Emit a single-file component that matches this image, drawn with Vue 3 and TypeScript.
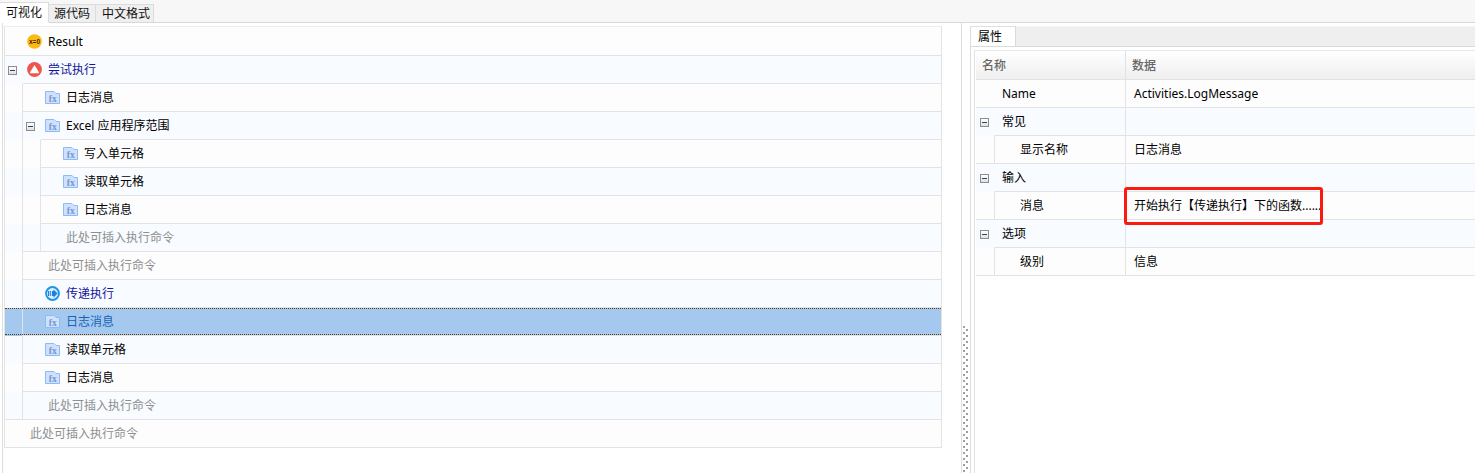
<script setup lang="ts">
type Ico = 'none' | 'x0' | 'try' | 'fx' | 'pass'
interface Row { d: number; text: string; icon: Ico; open?: boolean; kind?: 'hint' | 'blue'; sel?: boolean }
const raw: Row[] = [
  { d: 0, text: 'Result', icon: 'x0' },
  { d: 0, text: '尝试执行', icon: 'try', open: true, kind: 'blue' },
  { d: 1, text: '日志消息', icon: 'fx' },
  { d: 1, text: 'Excel 应用程序范围', icon: 'fx', open: true },
  { d: 2, text: '写入单元格', icon: 'fx' },
  { d: 2, text: '读取单元格', icon: 'fx' },
  { d: 2, text: '日志消息', icon: 'fx' },
  { d: 2, text: '此处可插入执行命令', icon: 'none', kind: 'hint' },
  { d: 1, text: '此处可插入执行命令', icon: 'none', kind: 'hint' },
  { d: 1, text: '传递执行', icon: 'pass', kind: 'blue' },
  { d: 1, text: '日志消息', icon: 'fx', sel: true },
  { d: 1, text: '读取单元格', icon: 'fx' },
  { d: 1, text: '日志消息', icon: 'fx' },
  { d: 1, text: '此处可插入执行命令', icon: 'none', kind: 'hint' },
  { d: 0, text: '此处可插入执行命令', icon: 'none', kind: 'hint' },
]
const rows = raw.map((r, i) => ({ ...r, next: i + 1 < raw.length ? raw[i + 1].d : 0, stripe: i % 2 === 1 }))
const tabs = [
  { label: '可视化', active: true },
  { label: '源代码', active: false },
  { label: '中文格式', active: false },
]
const props = [
  { name: 'Name', value: 'Activities.LogMessage', child: false, group: false },
  { name: '常见', value: '', child: false, group: true },
  { name: '显示名称', value: '日志消息', child: true, group: false },
  { name: '输入', value: '', child: false, group: true },
  { name: '消息', value: '开始执行【传递执行】下的函数......', child: true, group: false },
  { name: '选项', value: '', child: false, group: true },
  { name: '级别', value: '信息', child: true, group: false },
]
</script>

<template>
  <div class="app">
    <div class="tabbar">
      <div v-for="t in tabs" :key="t.label" class="tab" :class="{ active: t.active }">{{ t.label }}</div>
    </div>
    <div class="body">
      <div class="left">
        <div class="tree">
          <div v-for="(r, i) in rows" :key="i" class="row" :class="{ stripe: r.stripe, sel: r.sel }">
            <div v-for="g in r.d" :key="g" class="guide" :class="{ line: g - 1 >= r.next }"></div>
            <div class="tog" :class="{ line: r.next <= r.d }">
              <span v-if="r.open" class="minus"></span>
            </div>
            <div class="cell" :class="r.kind">
              <svg v-if="r.icon === 'x0'" class="ico" viewBox="0 0 15 15">
                <circle cx="7.5" cy="7.5" r="7.3" fill="#fdb913" />
                <text x="7.5" y="9.800" text-anchor="middle" class="x0">x=0</text>
              </svg>
              <svg v-else-if="r.icon === 'try'" class="ico" viewBox="0 0 15 15">
                <circle cx="7.5" cy="7.5" r="7.4" fill="#f0554a" />
                <path d="M7.5 3 11.800 10a.8.8 0 0 1-.7 1.300H3.900a.8.8 0 0 1-.7-1.300z" fill="#fff" />
              </svg>
              <svg v-else-if="r.icon === 'fx'" class="ico" viewBox="0 0 15 15">
                <path d="M.5 1.5h8.500l2 2h3.500v10h-14z" fill="#cfe1fd" stroke="#8dbbfa" />
                <text x="7.800" y="11.800" text-anchor="middle" class="fx">fx</text>
              </svg>
              <svg v-else-if="r.icon === 'pass'" class="ico" viewBox="0 0 15 15">
                <circle cx="7.5" cy="7.5" r="6.4" fill="#e3f2fd" stroke="#1e96e8" stroke-width="2" />
                <path d="M3 5h5.500V3.300l4 4.200-4 4.200V10H3z" fill="#1e7fe0" />
                <path d="M4.700 5v5M6.500 5v5" stroke="#fff" stroke-width=".8" />
              </svg>
              <span v-else class="noico"></span>
              <span class="label">{{ r.text }}</span>
            </div>
          </div>
        </div>
      </div>
      <div class="split"><span class="grip"></span></div>
      <div class="right">
        <div class="rtabs"><div class="rtab">属性</div></div>
        <div class="grid">
          <div class="ghead">
            <div class="gh1">名称</div>
            <div class="gh2">数据</div>
          </div>
          <div v-for="p in props" :key="p.name" class="prow" :class="{ group: p.group }">
            <div class="pleft">
              <div class="ptog" :class="{ guide2: p.child, line: !p.group }">
                <span v-if="p.group" class="minus"></span>
              </div>
              <div class="pname" :class="{ sub: p.child }">{{ p.name }}</div>
            </div>
            <div class="pval">{{ p.value }}</div>
          </div>
          <div class="redbox"></div>
        </div>
      </div>
    </div>
  </div>
</template>

<style>
html, body { margin: 0; background: #fff; overflow: hidden; }
</style>

<style scoped>
.app {
  width: 1475px;
  height: 473px;
  display: flex;
  flex-direction: column;
  overflow: hidden;
  background: #fff;
  color: #000;
  font: 12px/16px "Noto Sans", "Noto Sans CJK SC", sans-serif;
}
.tabbar {
  height: 23px;
  box-sizing: border-box;
  display: flex;
  align-items: flex-end;
  background: #f7f7f7;
  border-bottom: 1px solid #d8d8d8;
  flex: none;
}
.tab {
  height: 19px;
  margin-bottom: -1px;
  box-sizing: border-box;
  padding: 1px 5px 0;
  margin-left: -1px;
  background: #efefef;
  border: 1px solid #dcdcdc;
  border-bottom-color: #d8d8d8;
  color: #111;
  line-height: 16px;
}
.tab:first-child { margin-left: 0; }
.tab.active {
  height: 21px;
  padding: 2px 6px 0 6px;
  background: #fff;
  border-left: 0;
  border-bottom-color: #fff;
  position: relative;
}
.tab:last-child { padding-left: 6px; padding-right: 3px; }
.body { flex: 1; display: flex; min-height: 0; }
.left {
  margin-left: 2px;
  border-left: 1px solid #dedede;
  border-right: 1px solid #dedede;
  padding-left: 1px;
  flex: none;
  width: 957px;
}
.tree {
  width: 938px;
  box-sizing: border-box;
  margin-top: 3px;
  padding-top: 1px;
  border-top: 1px solid #ececec;
  border-left: 1px solid #e3e3e3;
  border-right: 1px solid #e3e3e3;
}
.row {
  display: flex;
  height: 28px;
  position: relative;
  background: #fdfdfd;
}
.row.stripe { background: #f8fbff; }
.row.sel { background: #a5c8ef; }
.row.sel::after {
  content: "";
  position: absolute;
  left: 0;
  right: 0;
  top: 0;
  height: 27px;
  box-sizing: border-box;
  border-top: 1px dotted #5c3a10;
  border-bottom: 1px dotted #5c3a10;
}
.guide {
  width: 18px;
  flex: none;
  box-sizing: border-box;
  border-right: 1px solid #e3e3e3;
}
.line { border-bottom: 1px solid #e3e3e3; }
.tog {
  width: 18px;
  flex: none;
  box-sizing: border-box;
  display: flex;
  align-items: center;
  padding-left: 3px;
}
.minus {
  width: 9px;
  height: 9px;
  box-sizing: border-box;
  border: 1px solid #8e8e8e;
  background: linear-gradient(#fff, #e0e0e0);
  position: relative;
  display: block;
  flex: none;
}
.minus::after {
  content: "";
  position: absolute;
  left: 1px;
  right: 1px;
  top: 3px;
  height: 1px;
  background: #33406a;
}
.cell {
  flex: 1;
  display: flex;
  align-items: center;
  box-sizing: border-box;
  border-bottom: 1px solid #e3e3e3;
  padding-left: 4px;
  min-width: 0;
}
.ico { width: 15px; height: 15px; flex: none; display: block; }
.noico { width: 0; flex: none; }
.label { margin-left: 6px; white-space: nowrap; }
.cell.hint { color: #8f8f8f; padding-left: 1px; }
.cell.blue { color: #15159a; }
.sel .label { color: #1664b8; }
.x0 { font: 700 6.500px "Liberation Sans", sans-serif; fill: #4a2c00; }
.fx { font: 700 9.500px "Liberation Serif", serif; fill: #7396cc; }
.split { width: 8px; flex: none; position: relative; }
.grip {
  position: absolute;
  left: 1px;
  top: 303px;
  bottom: 0;
  width: 5px;
  background-image:
    linear-gradient(#a0a0a0 0 2px, transparent 2px),
    linear-gradient(#a0a0a0 0 2px, transparent 2px);
  background-size: 2px 6px, 2px 6px;
  background-position: 0 0, 3px 3px;
  background-repeat: repeat-y, repeat-y;
}
.right {
  flex: 1;
  min-width: 0;
  margin-top: 3px;
  border-left: 1px solid #dedede;
  display: flex;
  flex-direction: column;
}
.rtabs {
  height: 21px;
  box-sizing: border-box;
  background: #efefef;
  border-bottom: 1px solid #dadada;
  flex: none;
  border-top: 1px solid #f4f4f4;
}
.rtab {
  width: 45px;
  height: 20px;
  box-sizing: border-box;
  background: #fff;
  border-right: 1px solid #dadada;
  padding: 2px 0 0 7px;
  line-height: 16px;
  color: #000;
  margin-top: -1px;
  border-top: 1px solid #e0e0e0;
}
.grid {
  margin: 3px 0 0 3px;
  flex: 1;
  position: relative;
  border-left: 1px solid #e3e3e3;
  border-top: 1px solid #e8e8e8;
  padding-left: 1px;
}
.ghead {
  display: flex;
  height: 29px;
  box-sizing: border-box;
  background: linear-gradient(#fff, #efefef);
  border-bottom: 1px solid #e3e3e3;
  color: #666;
  font-weight: 500;
  align-items: center;
}
.gh1 { width: 150px; box-sizing: border-box; padding: 1px 0 0 6px; border-right: 1px solid #e3e3e3; height: 100%; display: flex; align-items: center; }
.gh2 { padding: 1px 0 0 6px; }
.prow { display: flex; height: 28px; background: #fdfdfd; }
.prow.group { background: #f8fbff; }
.pleft { width: 150px; flex: none; display: flex; box-sizing: border-box; border-right: 1px solid #e3e3e3; }
.ptog { width: 18px; flex: none; box-sizing: border-box; display: flex; align-items: center; padding-left: 4px; }
.ptog.guide2 { width: 19px; border-right: 1px solid #e3e3e3; }
.pname { flex: 1; box-sizing: border-box; padding-left: 8px; border-bottom: 1px solid #e3e3e3; display: flex; align-items: center; }
.pname.sub { padding-left: 25px; }
.pval { flex: 1; box-sizing: border-box; padding-left: 8px; border-bottom: 1px solid #e3e3e3; display: flex; align-items: center; white-space: nowrap; }
.redbox {
  position: absolute;
  left: 149px;
  top: 136px;
  width: 199px;
  height: 38px;
  box-sizing: border-box;
  border: 3px solid #fb1a10;
  border-radius: 3px;
  pointer-events: none;
}
</style>
